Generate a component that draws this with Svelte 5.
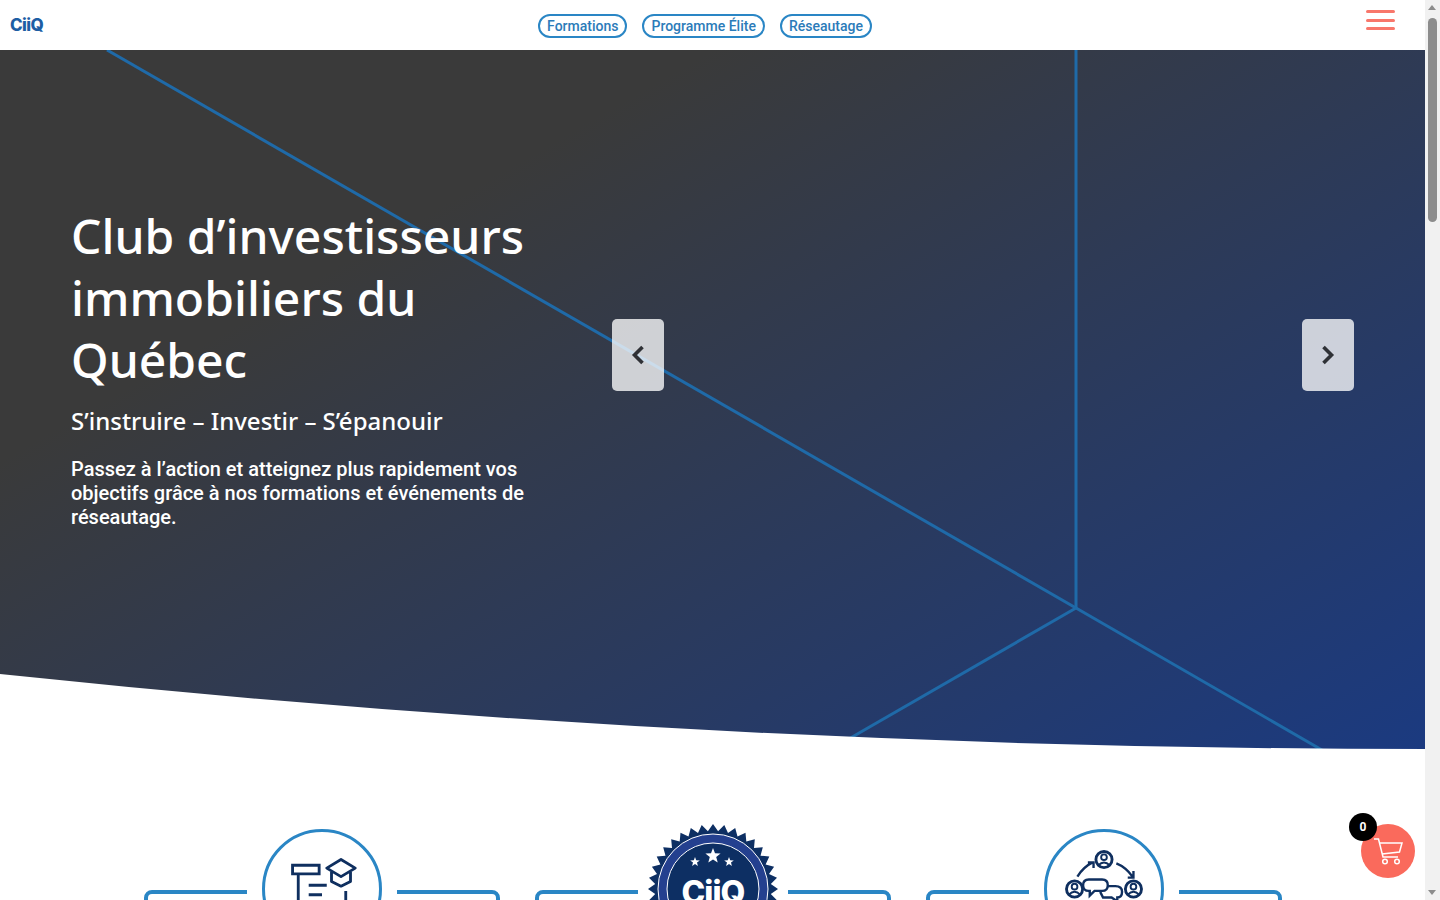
<script>
  const navItems = ['Formations', 'Programme Élite', 'Réseautage'];

  // scalloped edge of the medal
  function sealPath(cx, cy, outer, inner, teeth) {
    let d = '';
    for (let i = 0; i < teeth * 2; i++) {
      const r = i % 2 === 0 ? outer : inner;
      const a = (Math.PI * i) / teeth - Math.PI / 2;
      d += (i === 0 ? 'M' : 'L') + (cx + r * Math.cos(a)).toFixed(1) + ' ' + (cy + r * Math.sin(a)).toFixed(1);
    }
    return d + 'Z';
  }

  function starPath(cx, cy, r) {
    let d = '';
    for (let i = 0; i < 10; i++) {
      const rr = i % 2 === 0 ? r : r * 0.42;
      const a = (Math.PI * i) / 5 - Math.PI / 2;
      d += (i === 0 ? 'M' : 'L') + (cx + rr * Math.cos(a)).toFixed(1) + ' ' + (cy + rr * Math.sin(a)).toFixed(1);
    }
    return d + 'Z';
  }
</script>

<div class="window">
  <div class="page">
    <header class="topbar">
      <a class="logo" href="#top">CiiQ</a>
      <nav class="nav">
        {#each navItems as item}
          <a class="pill" href="#top">{item}</a>
        {/each}
      </nav>
      <button class="burger" aria-label="Menu">
        <span></span>
        <span></span>
        <span></span>
      </button>
    </header>

    <section class="hero">
      <svg class="hero-art" viewBox="0 0 1425 699" width="1425" height="699" aria-hidden="true">
        <g stroke="#1f6aa8" stroke-width="3" fill="none">
          <path d="M107 0L1076 558" />
          <path d="M1076 0V558" />
          <path d="M1076 558L840 694" />
          <path d="M1076 558L1322 700" />
        </g>
        <path d="M0 624Q708 699 1425 699V700H0Z" fill="#fff" />
      </svg>

      <div class="hero-text">
        <h1>Club d’investisseurs immobiliers du Québec</h1>
        <h2>S’instruire – Investir – S’épanouir</h2>
        <p>Passez à l’action et atteignez plus rapidement vos objectifs grâce à nos formations et événements de réseautage.</p>
      </div>

      <button class="arrow prev" aria-label="Précédent">
        <svg viewBox="0 0 16 24" width="16" height="24"><path d="M12.5 4L4.5 12L12.5 20" /></svg>
      </button>
      <button class="arrow next" aria-label="Suivant">
        <svg viewBox="0 0 16 24" width="16" height="24"><path d="M3.5 4L11.5 12L3.5 20" /></svg>
      </button>
    </section>

    <section class="cards">
      <article class="card">
        <div class="badge ring">
          <svg viewBox="0 0 120 120" width="120" height="120" fill="none" stroke="#0f2f5f" stroke-width="3">
            <path d="M29 35H57V44H29ZM35 44V90M46 56H65M46 66H60" />
            <path d="M80 29L95 38L80 47L65 38ZM70 42V52L80 57L90 52V42" stroke-linejoin="round" />
            <path d="M85 62V84" />
          </svg>
        </div>
      </article>

      <article class="card">
        <div class="badge seal">
          <svg viewBox="0 0 130 130" width="130" height="130">
            <path d={sealPath(65, 65, 65, 58, 36)} fill="#0d2f63" />
            <circle cx="65" cy="65" r="55" fill="#24408f" stroke="#fff" stroke-width="1" />
            <circle cx="65" cy="65" r="46" fill="#0d2f63" stroke="#fff" stroke-width="1" />
            <path d={starPath(65, 32, 8)} fill="#fff" />
            <path d={starPath(47, 38, 5)} fill="#fff" />
            <path d={starPath(81, 38, 5)} fill="#fff" />
            <text x="65" y="80" text-anchor="middle" class="seal-text">CiiQ</text>
          </svg>
        </div>
      </article>

      <article class="card">
        <div class="badge ring">
          <svg viewBox="0 0 120 120" width="120" height="120" fill="none" stroke="#0f2f5f" stroke-width="3">
            <circle cx="60" cy="29" r="8.5" />
            <circle cx="60" cy="26.5" r="3" stroke-width="2" />
            <path d="M54 35Q60 29 66 35" stroke-width="2" />
            <circle cx="29" cy="60" r="8.5" />
            <circle cx="29" cy="57.5" r="3" stroke-width="2" />
            <path d="M23 66Q29 60 35 66" stroke-width="2" />
            <circle cx="91" cy="60" r="8.5" />
            <circle cx="91" cy="57.5" r="3" stroke-width="2" />
            <path d="M85 66Q91 60 97 66" stroke-width="2" />
            <path d="M32 47Q38 37 48 32M43 32H49V38" stroke-width="2.5" />
            <path d="M73 33Q83 37 90 47M91 41V48H85" stroke-width="2.5" />
            <path d="M44 50H58Q64 50 64 56T58 62H50L45 67V62H44Q38 62 38 56T44 50Z" stroke-width="2.5" />
            <path d="M64 57H72Q79 57 79 63T74 69V73L68 69H59L56 63" stroke-width="2.5" />
          </svg>
        </div>
      </article>
    </section>
  </div>

  <aside class="scrollbar" aria-hidden="true">
    <span class="tri up"></span>
    <span class="thumb"></span>
    <span class="tri down"></span>
  </aside>

  <button class="cart" aria-label="Panier">
    <svg viewBox="0 0 32 32" width="32" height="32" fill="none" stroke="#fff" stroke-width="1.5">
      <path d="M2 4H6.5L11 22H26" />
      <path d="M7.5 8H30L27.5 17L10 19" />
      <circle cx="13" cy="26.5" r="2.3" />
      <circle cx="25" cy="26.5" r="2.3" />
    </svg>
    <span class="count">0</span>
  </button>
</div>

<style>
  :global(html), :global(body) {
    margin: 0;
    height: 100%;
    overflow: hidden;
  }

  .window {
    display: flex;
    height: 100vh;
    overflow: hidden;
    background: #fff;
    font-family: Roboto, "Liberation Sans", sans-serif;
  }

  .page {
    flex: 1 1 auto;
    min-width: 0;
  }

  .topbar {
    display: flex;
    justify-content: space-between;
    align-items: flex-start;
    height: 50px;
    padding: 0 10px;
    box-sizing: border-box;
    background: #fff;
  }

  .logo {
    width: 39px;
    margin-top: 15px;
    font-family: Inter, sans-serif;
    font-size: 17px;
    font-weight: 800;
    line-height: 20px;
    letter-spacing: -0.6px;
    color: #1d5ea4;
    text-decoration: none;
  }

  .nav {
    display: flex;
    gap: 15px;
    margin-top: 14px;
  }

  .pill {
    padding: 0 7px;
    border: 2px solid #2a86c5;
    border-radius: 12px;
    font-size: 14px;
    font-weight: 500;
    line-height: 20px;
    color: #2b7bb9;
    text-decoration: none;
  }

  .burger {
    display: flex;
    flex-direction: column;
    gap: 5.5px;
    width: 54px;
    padding: 10px 20px 0 5px;
    border: 0;
    background: none;
  }

  .burger span {
    display: block;
    height: 3px;
    border-radius: 2px;
    background: #f8776b;
  }

  .hero {
    position: relative;
    height: 699px;
    background: linear-gradient(150deg, #3a3a3a 27%, #1b3a80 100%);
    overflow: hidden;
  }

  .hero-art {
    position: absolute;
    inset: 0;
    display: block;
  }

  .hero-text {
    position: relative;
    width: 480px;
    padding: 155px 0 0 71px;
    color: #fff;
  }

  h1 {
    margin: 0;
    font-family: "Noto Sans", "Open Sans", sans-serif;
    font-size: 48px;
    font-weight: 500;
    line-height: 62px;
  }

  h2 {
    margin: 14px 0 0;
    font-family: "Noto Sans", "Open Sans", sans-serif;
    font-size: 24px;
    font-weight: 500;
    line-height: 32px;
  }

  .hero-text p {
    margin: 20px 0 0;
    font-size: 20px;
    font-weight: 500;
    line-height: 24px;
  }

  .arrow {
    position: absolute;
    top: 269px;
    display: flex;
    align-items: center;
    justify-content: center;
    width: 52px;
    height: 72px;
    padding: 0;
    border: 0;
    border-radius: 5px;
    background: rgba(255, 255, 255, 0.77);
  }

  .arrow path {
    fill: none;
    stroke: #2f3136;
    stroke-width: 3.6;
  }

  .prev { left: 612px; }
  .next { left: 1302px; }

  .cards {
    display: flex;
    justify-content: center;
    gap: 35px;
    padding-top: 141px;
  }

  .card {
    position: relative;
    width: 356px;
    height: 300px;
    box-sizing: border-box;
    border: 4px solid #2a86c5;
    border-radius: 8px;
  }

  .badge {
    position: absolute;
    left: 50%;
    transform: translateX(-50%);
    background: #fff;
  }

  .ring {
    top: -65px;
    width: 150px;
    height: 126px;
    background: linear-gradient(#fff, #fff);
    display: flex;
    justify-content: center;
  }

  .ring svg {
    box-sizing: border-box;
    border: 3px solid #2a86c5;
    border-radius: 50%;
  }

  .seal {
    top: -70px;
    width: 150px;
    display: flex;
    justify-content: center;
  }

  .seal-text {
    font-family: Inter, sans-serif;
    font-size: 32px;
    font-weight: 800;
    letter-spacing: -1px;
    fill: #fff;
  }

  .scrollbar {
    position: relative;
    flex: 0 0 15px;
    background: #f1f1f1;
  }

  .thumb {
    position: absolute;
    top: 18px;
    left: 3px;
    width: 9px;
    height: 204px;
    border-radius: 5px;
    background: #8c8c8c;
  }

  .tri {
    position: absolute;
    left: 3px;
    width: 0;
    height: 0;
    border-left: 4.5px solid transparent;
    border-right: 4.5px solid transparent;
  }

  .tri.up {
    top: 5px;
    border-bottom: 5px solid #8c8c8c;
  }

  .tri.down {
    bottom: 5px;
    border-top: 5px solid #8c8c8c;
  }

  .cart {
    position: fixed;
    left: 1361px;
    top: 824px;
    display: flex;
    align-items: center;
    justify-content: center;
    width: 54px;
    height: 54px;
    padding: 0;
    border: 0;
    border-radius: 50%;
    background: #fa6a5c;
  }

  .count {
    position: absolute;
    left: -12px;
    top: -11px;
    width: 28px;
    height: 28px;
    border-radius: 50%;
    background: #000;
    color: #fff;
    font-family: Roboto, sans-serif;
    font-size: 12px;
    font-weight: 700;
    line-height: 28px;
    text-align: center;
  }
</style>
